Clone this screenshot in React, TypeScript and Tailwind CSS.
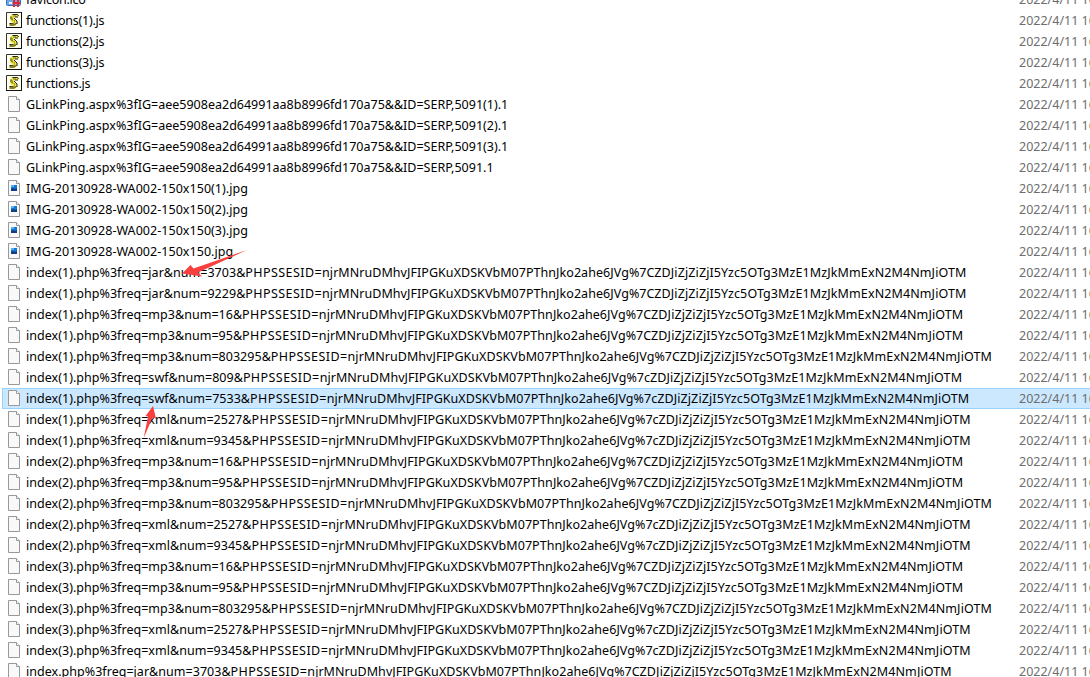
type Kind = 'ico' | 'js' | 'blank' | 'jpg'

type FileRow = {
  kind: Kind
  name: string
  hex?: 'C' | 'c'
  selected?: boolean
}

const TOKEN = 'njrMNruDMhvJFIPGKuXDSKVbM07PThnJko2ahe6JVg'
const TAIL = 'ZDJiZjZiZjI5Yzc5OTg3MzE1MzJkMmExN2M4NmJiOTM'

// The escaped pipe keeps whichever case the crawler saved it with.
const php = (name: string, hex: 'C' | 'c' = 'C', selected = false): FileRow => ({
  kind: 'blank',
  name,
  hex,
  selected,
})

const COPIES = ['(1)', '(2)', '(3)', '']

const FILES: FileRow[] = [
  { kind: 'ico', name: 'favicon.ico' },
  ...COPIES.map((n): FileRow => ({ kind: 'js', name: `functions${n}.js` })),
  ...COPIES.map(
    (n): FileRow => ({
      kind: 'blank',
      name: `GLinkPing.aspx%3fIG=aee5908ea2d64991aa8b8996fd170a75&&ID=SERP,5091${n}.1`,
    }),
  ),
  ...COPIES.map((n): FileRow => ({ kind: 'jpg', name: `IMG-20130928-WA002-150x150${n}.jpg` })),
  php('index(1).php%3freq=jar&num=3703&'),
  php('index(1).php%3freq=jar&num=9229&'),
  php('index(1).php%3freq=mp3&num=16&'),
  php('index(1).php%3freq=mp3&num=95&'),
  php('index(1).php%3freq=mp3&num=803295&'),
  php('index(1).php%3freq=swf&num=809&', 'c'),
  php('index(1).php%3freq=swf&num=7533&', 'c', true),
  php('index(1).php%3freq=xml&num=2527&', 'c'),
  php('index(1).php%3freq=xml&num=9345&', 'c'),
  php('index(2).php%3freq=mp3&num=16&'),
  php('index(2).php%3freq=mp3&num=95&'),
  php('index(2).php%3freq=mp3&num=803295&'),
  php('index(2).php%3freq=xml&num=2527&', 'c'),
  php('index(2).php%3freq=xml&num=9345&', 'c'),
  php('index(3).php%3freq=mp3&num=16&'),
  php('index(3).php%3freq=mp3&num=95&'),
  php('index(3).php%3freq=mp3&num=803295&'),
  php('index(3).php%3freq=xml&num=2527&', 'c'),
  php('index(3).php%3freq=xml&num=9345&', 'c'),
  php('index.php%3freq=jar&num=3703&'),
]

function Page() {
  return (
    <>
      <path d="M2.5 .5h8l3 3v12h-11z" fill="#f9f9f9" stroke="#989898" />
      <path d="M10.5 .5v3h3" fill="#fff" stroke="#989898" />
    </>
  )
}

function FileIcon({ kind }: { kind: Kind }) {
  return (
    <svg className="mb-px h-4 w-4 shrink-0" viewBox="0 0 16 16">
      {kind === 'blank' && <Page />}
      {kind === 'jpg' && (
        <>
          <Page />
          <path d="M5 5h6v6H5z" fill="#1478d4" />
          <path d="M5 5h3v2H5z" fill="#52b6f2" />
          <path d="M5 9l2-1 2 1 2-1v3H5z" fill="#123f7c" />
        </>
      )}
      {kind === 'js' && (
        <>
          <path d="M.5 .5h15v15H.5z" fill="#fffff0" stroke="#333" />
          <path d="M15.5 0v15.5H0" fill="none" stroke="#111" />
          <path d="M6 2h6l1 2-1 1H9L8 6l3 3v3l-2 2H4l-1-2 1-1h3L4 8V5z" fill="#f0e640" />
          <path
            d="M6.5 2.5h5l1 1.5M5 4.5v2l2 2M9 5h3M8 6l3 3v3M3.5 11.5h4M3.5 13h5l2-2"
            fill="none"
            stroke="#222"
          />
          <path d="M7 4h3M6 6h1M8 9h1M8 11h1M5 12h2" fill="none" stroke="#77751f" />
        </>
      )}
      {kind === 'ico' && (
        <>
          <rect x=".5" y="3.5" width="14" height="11" rx="1" fill="#6ca8e8" stroke="#2e6fbd" />
          <path d="M3 11h3v2H3z" fill="#e8f4ff" />
          <path d="M8 9v7M12 9v7M8 12h6" stroke="#e32636" strokeWidth="2" />
        </>
      )}
    </svg>
  )
}

function FileName({ file }: { file: FileRow }) {
  if (file.kind === 'js' || file.kind === 'ico') {
    return <span className="tracking-[-0.25px]">{file.name}</span>
  }
  if (file.kind === 'jpg') return <span className="tracking-[0.04px]">{file.name}</span>
  if (!file.hex) return <span>{file.name}</span>
  return (
    <>
      <span className="tracking-[0.03px]">{file.name}</span>
      <span className="tracking-[0.43px]">PHPSSESID=</span>
      <span className="tracking-[0.05px]">{TOKEN}</span>%7{file.hex}
      <span className="tracking-[0.11px]">{TAIL}</span>
    </>
  )
}

function Row({ file }: { file: FileRow }) {
  return (
    <div
      className={
        file.selected
          ? 'ml-0.5 flex h-[21px] items-center border-y border-l border-[#99d1ff] bg-[#cce8ff] pl-[3px]'
          : 'flex h-[21px] items-center pl-1.5'
      }
    >
      <FileIcon kind={file.kind} />
      <div className="ml-1 flex-1 whitespace-pre text-black">
        <FileName file={file} />
      </div>
      <div className="w-[71px] shrink-0 overflow-hidden whitespace-pre text-[#6d6d6d]">
        2022/4/11 16:09
      </div>
    </div>
  )
}

function Arrows() {
  return (
    <svg
      className="pointer-events-none absolute inset-0 h-full w-full"
      viewBox="0 0 1090 677"
      fill="#f8413e"
    >
      <path d="M247 250L198 272.5L202 276.500L182 273.500L190.500 265L193.500 268.500Z" />
      <path d="M153 406L156 418.500L152.500 417.500L143.700 438L148 416.500L145.500 416Z" />
    </svg>
  )
}

export default function App() {
  return (
    <div className="relative h-[677px] w-[1090px] overflow-hidden bg-white font-['Noto_Sans','Open_Sans',sans-serif] text-[12.5px] leading-[21px]">
      <div className="-mt-[11px]">
        {FILES.map((file) => (
          <Row key={file.name} file={file} />
        ))}
      </div>
      <Arrows />
    </div>
  )
}
